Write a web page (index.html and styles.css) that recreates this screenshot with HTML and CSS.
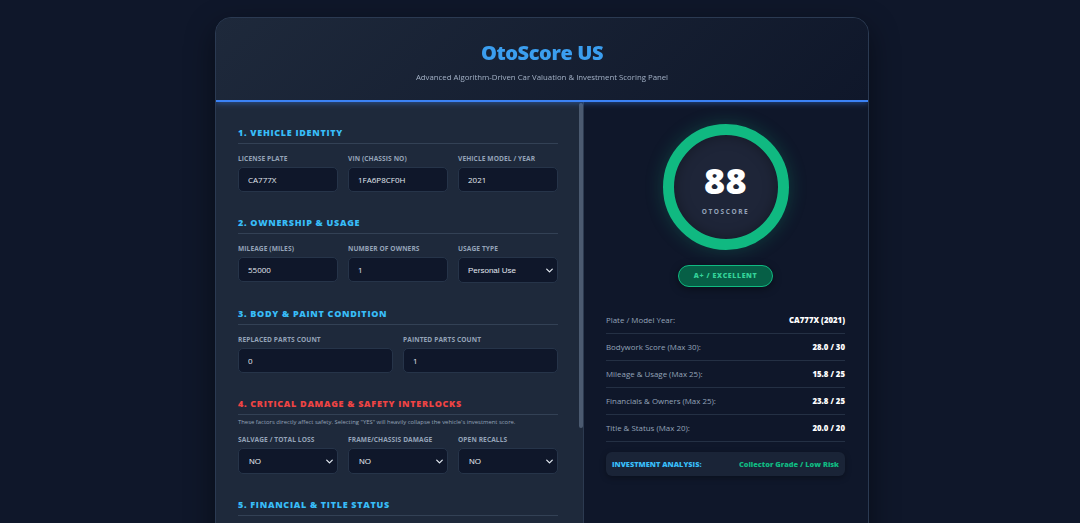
FILE: index.html
```html
<!DOCTYPE html>
<html lang="en">
<head>
<meta charset="utf-8">
<title>OtoScore US</title>
<link rel="stylesheet" href="styles.css">
</head>
<body>
<main class="card">
  <header class="card-header">
    <h1 class="brand">OtoScore US</h1>
    <p class="tagline">Advanced Algorithm-Driven Car Valuation &amp; Investment Scoring Panel</p>
  </header>

  <div class="panels">
    <div class="form-frame">
    <section class="form-panel">
      <div class="group">
        <h2 class="group-title">1. Vehicle Identity</h2>
        <div class="fields cols-3">
          <label class="field"><span class="field-label">License Plate</span><input class="control" type="text" value="CA777X"></label>
          <label class="field"><span class="field-label">VIN (Chassis No)</span><input class="control" type="text" value="1FA6P8CF0H"></label>
          <label class="field"><span class="field-label">Vehicle Model / Year</span><input class="control" type="text" value="2021"></label>
        </div>
      </div>

      <div class="group">
        <h2 class="group-title">2. Ownership &amp; Usage</h2>
        <div class="fields cols-3">
          <label class="field"><span class="field-label">Mileage (Miles)</span><input class="control" type="text" value="55000"></label>
          <label class="field"><span class="field-label">Number of Owners</span><input class="control" type="text" value="1"></label>
          <label class="field"><span class="field-label">Usage Type</span>
            <span class="select-wrap">
              <select class="control select"><option>Personal Use</option><option>Commercial</option><option>Rental / Fleet</option></select>
              <svg class="chev" viewBox="0 0 10 6" width="7" height="5"><path d="M1 1l4 4 4-4" fill="none" stroke="#e2e8f0" stroke-width="1.8" stroke-linecap="round" stroke-linejoin="round"/></svg>
            </span>
          </label>
        </div>
      </div>

      <div class="group">
        <h2 class="group-title">3. Body &amp; Paint Condition</h2>
        <div class="fields cols-2">
          <label class="field"><span class="field-label">Replaced Parts Count</span><input class="control" type="text" value="0"></label>
          <label class="field"><span class="field-label">Painted Parts Count</span><input class="control" type="text" value="1"></label>
        </div>
      </div>

      <div class="group">
        <h2 class="group-title danger">4. Critical Damage &amp; Safety Interlocks</h2>
        <p class="group-note">These factors directly affect safety. Selecting "YES" will heavily collapse the vehicle's investment score.</p>
        <div class="fields cols-3">
          <label class="field"><span class="field-label">Salvage / Total Loss</span>
            <span class="select-wrap">
              <select class="control select tall"><option>NO</option><option>YES</option></select>
              <svg class="chev" viewBox="0 0 10 6" width="7" height="5"><path d="M1 1l4 4 4-4" fill="none" stroke="#e2e8f0" stroke-width="1.8" stroke-linecap="round" stroke-linejoin="round"/></svg>
            </span>
          </label>
          <label class="field"><span class="field-label">Frame/Chassis Damage</span>
            <span class="select-wrap">
              <select class="control select tall"><option>NO</option><option>YES</option></select>
              <svg class="chev" viewBox="0 0 10 6" width="7" height="5"><path d="M1 1l4 4 4-4" fill="none" stroke="#e2e8f0" stroke-width="1.8" stroke-linecap="round" stroke-linejoin="round"/></svg>
            </span>
          </label>
          <label class="field"><span class="field-label">Open Recalls</span>
            <span class="select-wrap">
              <select class="control select tall"><option>NO</option><option>YES</option></select>
              <svg class="chev" viewBox="0 0 10 6" width="7" height="5"><path d="M1 1l4 4 4-4" fill="none" stroke="#e2e8f0" stroke-width="1.8" stroke-linecap="round" stroke-linejoin="round"/></svg>
            </span>
          </label>
        </div>
      </div>

      <div class="group">
        <h2 class="group-title">5. Financial &amp; Title Status</h2>
        <div class="fields cols-3">
          <label class="field"><span class="field-label">Title Type</span>
            <span class="select-wrap">
              <select class="control select"><option>Clean</option><option>Rebuilt</option></select>
              <svg class="chev" viewBox="0 0 10 6" width="7" height="5"><path d="M1 1l4 4 4-4" fill="none" stroke="#e2e8f0" stroke-width="1.8" stroke-linecap="round" stroke-linejoin="round"/></svg>
            </span>
          </label>
          <label class="field"><span class="field-label">Active Liens</span><input class="control" type="text" value="0"></label>
          <label class="field"><span class="field-label">Market Price ($)</span><input class="control" type="text" value="38500"></label>
        </div>
      </div>

      <div class="group">
        <h2 class="group-title">6. Service History</h2>
        <div class="fields cols-2">
          <label class="field"><span class="field-label">Dealer Services</span><input class="control" type="text" value="6"></label>
          <label class="field"><span class="field-label">Last Service (Miles)</span><input class="control" type="text" value="52000"></label>
        </div>
      </div>
    </section>
    <span class="scroll-thumb" aria-hidden="true"></span>
    </div>

    <aside class="result-panel">
      <div class="gauge">
        <div class="gauge-ring">
          <span class="gauge-value">88</span>
          <span class="gauge-caption">OtoScore</span>
        </div>
      </div>
      <div class="grade-wrap"><span class="grade">A+ / Excellent</span></div>

      <ul class="breakdown">
        <li class="row"><span class="row-label">Plate / Model Year:</span><span class="row-value">CA777X (2021)</span></li>
        <li class="row"><span class="row-label">Bodywork Score (Max 30):</span><span class="row-value">28.0 / 30</span></li>
        <li class="row"><span class="row-label">Mileage &amp; Usage (Max 25):</span><span class="row-value">15.8 / 25</span></li>
        <li class="row"><span class="row-label">Financials &amp; Owners (Max 25):</span><span class="row-value">23.8 / 25</span></li>
        <li class="row"><span class="row-label">Title &amp; Status (Max 20):</span><span class="row-value">20.0 / 20</span></li>
      </ul>

      <div class="analysis">
        <span class="analysis-label">Investment Analysis:</span>
        <span class="analysis-value">Collector Grade / Low Risk</span>
      </div>
    </aside>
  </div>
</main>
</body>
</html>
```

FILE: styles.css
```css
* {
  box-sizing: border-box;
}

html,
body {
  margin: 0;
  padding: 0;
}

body {
  background: #0f172a;
  font-family: "Open Sans", "Noto Sans", "DejaVu Sans", sans-serif;
  color: #e2e8f0;
  padding-top: 17px;
  overflow: hidden;
}

.card {
  width: 654px;
  margin: 0 auto;
  transform: translateX(2px);
  border: 1px solid #2b3a52;
  border-radius: 16px;
  overflow: hidden;
  background: #1e293b;
  box-shadow: 0 10px 30px rgba(0, 0, 0, 0.45);
}

/* header */
.card-header {
  background: linear-gradient(135deg, #1e293b 0%, #0f172a 100%);
  text-align: center;
  padding: 21px 20px 17px;
  border-bottom: 2px solid #3b82f6;
  box-shadow: 0 1px 6px rgba(59, 130, 246, 0.45);
  position: relative;
  z-index: 1;
}

.brand {
  margin: 0;
  font-size: 20px;
  line-height: 27px;
  font-weight: 800;
  letter-spacing: -0.4px;
  color: #3b9eef;
}

.tagline {
  margin: 6px 0 0;
  font-size: 7.8px;
  line-height: 11px;
  color: #a3b1c6;
}

/* two columns: scrolling form on the left, results on the right */
.panels {
  display: grid;
  grid-template-columns: 368px 1fr;
  height: 445px;
}

.form-frame {
  position: relative;
  height: 445px;
  border-right: 1px solid #2c3a50;
}

.form-panel {
  background: #1e293b;
  padding: 24px 25px 30px 22px;
  overflow-y: auto;
  height: 445px;
  scrollbar-width: none;
}

.form-panel::-webkit-scrollbar {
  display: none;
}

/* slim scroll indicator along the form's right edge */
.scroll-thumb {
  position: absolute;
  top: 1px;
  right: 0;
  width: 4px;
  height: 325px;
  border-radius: 2px;
  background: #4b5a70;
  pointer-events: none;
}

.group + .group {
  margin-top: 24px;
}

.group-title {
  margin: 0 0 10px;
  padding-bottom: 4px;
  border-bottom: 1px solid #334155;
  font-size: 9px;
  line-height: 13px;
  font-weight: 800;
  letter-spacing: 0.7px;
  text-transform: uppercase;
  color: #38bdf8;
}

.group-title.danger {
  color: #ef4444;
}

.group-note {
  margin: -7px 0 8px;
  font-size: 5.9px;
  line-height: 9px;
  color: #94a3b8;
}

.fields {
  display: grid;
  gap: 10px;
}

.cols-3 {
  grid-template-columns: repeat(3, 1fr);
}

.cols-2 {
  grid-template-columns: repeat(2, 1fr);
}

.field {
  display: flex;
  flex-direction: column;
  gap: 4px;
}

.field-label {
  font-size: 6.6px;
  line-height: 9px;
  font-weight: 700;
  text-transform: uppercase;
  letter-spacing: 0.1px;
  color: #94a3b8;
}

.control {
  display: block;
  width: 100%;
  height: 25px;
  margin: 0;
  padding: 0 9px;
  background: #0f172a;
  border: 1px solid #263449;
  border-radius: 5px;
  color: #e2e8f0;
  font-family: inherit;
  font-size: 8px;
  outline: none;
}

.select-wrap {
  position: relative;
  display: block;
}

.select {
  appearance: none;
  -webkit-appearance: none;
  padding-right: 20px;
  height: 26px;
  font-family: "Liberation Sans", "Open Sans", sans-serif;
  font-size: 8px;
}

.select.tall {
  padding-left: 10px;
}

.chev {
  position: absolute;
  right: 5px;
  top: 50%;
  margin-top: -2px;
  pointer-events: none;
}

/* result side */
.result-panel {
  background: #0f172a;
  padding: 22px 23px 20px 22px;
}

.gauge {
  display: flex;
  justify-content: center;
}

.gauge-ring {
  width: 126px;
  height: 126px;
  border-radius: 50%;
  border: 11px solid #10b981;
  background: #1e2538;
  box-shadow: 0 0 18px rgba(16, 185, 129, 0.25), inset 0 0 14px rgba(0, 0, 0, 0.35);
  display: flex;
  flex-direction: column;
  align-items: center;
  justify-content: center;
  padding-top: 4px;
}

.gauge-value {
  font-size: 36px;
  line-height: 38px;
  font-weight: 800;
  color: #ffffff;
  letter-spacing: 0.5px;
}

.gauge-caption {
  margin-top: 7px;
  font-size: 6.5px;
  line-height: 9px;
  font-weight: 700;
  letter-spacing: 1.6px;
  text-transform: uppercase;
  color: #94a3b8;
}

.grade-wrap {
  display: flex;
  justify-content: center;
  margin-top: 15px;
}

.grade {
  display: inline-block;
  width: 95px;
  height: 22px;
  line-height: 20px;
  text-align: center;
  border-radius: 11px;
  border: 1px solid #10b981;
  background: #065f46;
  box-shadow: 0 2px 8px rgba(0, 0, 0, 0.4);
  color: #34d399;
  font-size: 7px;
  font-weight: 800;
  letter-spacing: 0.6px;
  text-transform: uppercase;
}

.breakdown {
  list-style: none;
  margin: 20px 0 0;
  padding: 0;
}

.row {
  display: flex;
  justify-content: space-between;
  align-items: center;
  padding: 7px 0;
  line-height: 12px;
  border-bottom: 1px solid #243044;
}

.row-label {
  font-size: 7.9px;
  color: #94a3b8;
}

.row-value {
  font-size: 7.8px;
  font-weight: 800;
  color: #ffffff;
}

.analysis {
  margin-top: 10px;
  height: 24px;
  display: flex;
  justify-content: space-between;
  align-items: center;
  padding: 0 6px;
  background: #1a2437;
  border-radius: 6px;
  box-shadow: 0 2px 6px rgba(0, 0, 0, 0.3);
}

.analysis-label {
  font-size: 7.4px;
  font-weight: 800;
  text-transform: uppercase;
  color: #38bdf8;
}

.analysis-value {
  font-size: 7.4px;
  font-weight: 800;
  color: #10b981;
}
```
